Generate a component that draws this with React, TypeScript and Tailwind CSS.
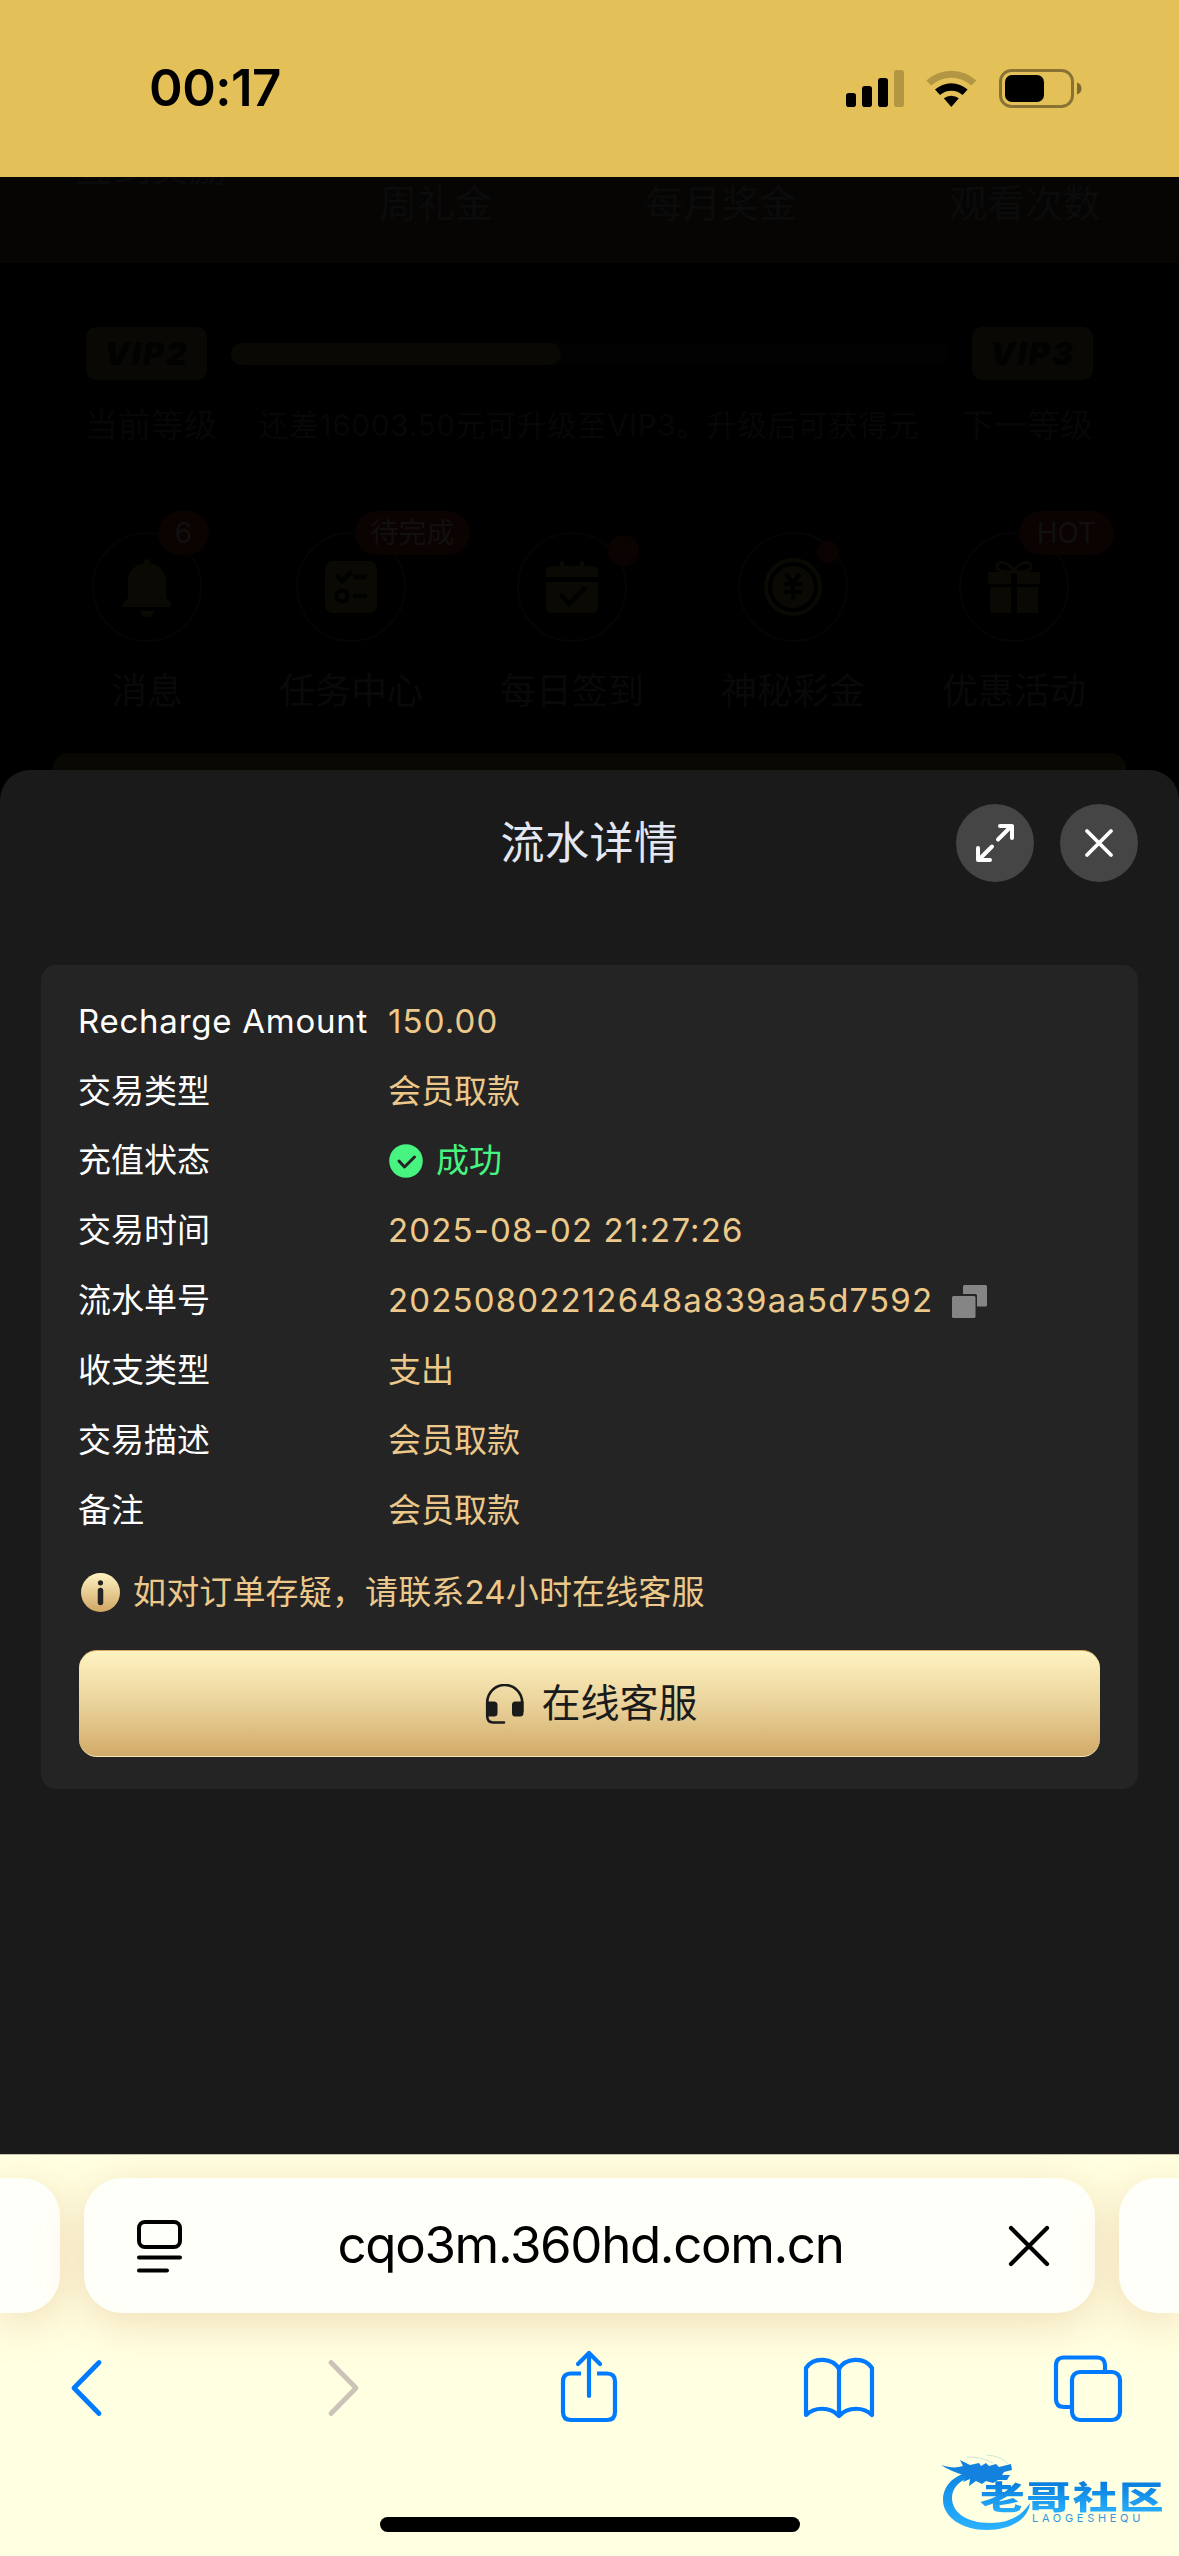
import React from 'react';

const gold = 'text-[#ecc98a]';

const rows: { label: string; value: string; kind?: 'status' | 'copy'; tracking?: string }[] = [
  { label: 'Recharge Amount', value: '150.00', tracking: 'tracking-[1.1px]' },
  { label: '交易类型', value: '会员取款' },
  { label: '充值状态', value: '成功', kind: 'status' },
  { label: '交易时间', value: '2025-08-02 21:27:26', tracking: 'tracking-[1.15px]' },
  { label: '流水单号', value: '20250802212648a839aa5d7592', kind: 'copy', tracking: 'tracking-[1.15px]' },
  { label: '收支类型', value: '支出' },
  { label: '交易描述', value: '会员取款' },
  { label: '备注', value: '会员取款' },
];

const StatusBar = () => (
  <header className="flex h-[177px] items-center justify-between bg-[#e4c058] pr-[97px] pl-[149px]">
    <span className="-mt-[2px] text-[51px] leading-none font-semibold tracking-[-0.5px] text-black">00:17</span>
    <svg className="-mt-[2px] h-[40px] w-[236px]" viewBox="846 67 236 40">
      <rect x="846" y="92" width="10" height="14" rx="2.800" />
      <rect x="862" y="85" width="10" height="21" rx="2.800" />
      <rect x="878" y="77" width="10" height="29" rx="2.800" />
      <rect x="894" y="69" width="10" height="37" rx="2.800" opacity=".22" />
      <path d="M926.300 79.500a37 37 0 0 1 50 0l-5 5a30 30 0 0 0-40 0z" opacity=".22" />
      <path d="M935 88.500a24.500 24.500 0 0 1 32.600 0l-5 5.500a17 17 0 0 0-22.600 0z" />
      <path d="M943.800 97.300a12 12 0 0 1 15 0l-7.500 8.700z" />
      <rect x="1000.500" y="69.500" width="72" height="36" rx="11" fill="none" stroke="#000" strokeWidth="3" opacity=".4" />
      <rect x="1005" y="74" width="39" height="27" rx="7" />
      <path d="M1077 81.500q4.500 1.500 4.500 6t-4.500 6z" opacity=".45" />
    </svg>
  </header>
);

const VipBadge = ({ level }: { level: number }) => (
  <div className="flex h-[53px] w-[121px] items-center justify-center rounded-[10px] bg-[#090804] text-[32px] font-black tracking-[2px] text-[#020200] italic">
    VIP{level}
  </div>
);

const BellIcon = () => (
  <svg className="size-[66px]" viewBox="0 0 66 66" fill="#0a0904">
    <path d="M33 5c2 0 3.500 2 3.500 4.500C46 11 52 18 52 27v17l5 5v4H9v-4l5-5V27c0-9 6-16 15.500-17.500C29.500 7 31 5 33 5zM26 57h14q-2 6-7 6t-7-6z" />
  </svg>
);

const TaskIcon = () => (
  <svg className="size-[66px]" viewBox="0 0 66 66">
    <rect x="7" y="7" width="52" height="52" rx="8" fill="#0a0904" />
    <path d="m19 22 5 5 8-8M37 23h10M37 42h10" fill="none" stroke="#010100" strokeWidth="4.500" strokeLinecap="round" />
    <circle cx="24" cy="42" r="5.500" fill="none" stroke="#010100" strokeWidth="4" />
  </svg>
);

const CalendarIcon = () => (
  <svg className="size-[66px]" viewBox="0 0 66 66">
    <path d="M23 9v8M43 9v8" stroke="#0a0904" strokeWidth="4.500" strokeLinecap="round" />
    <path d="M7 23v-5q0-6 6-6h40q6 0 6 6v5zM7 28h52v25q0 6-6 6H13q-6 0-6-6z" fill="#0a0904" />
    <path d="m23 42 7 8 15-15" fill="none" stroke="#010100" strokeWidth="4.500" strokeLinecap="round" />
  </svg>
);

const CoinIcon = () => (
  <svg className="size-[66px]" viewBox="0 0 66 66">
    <circle cx="33" cy="33" r="27" fill="none" stroke="#0a0904" strokeWidth="4" />
    <circle cx="33" cy="33" r="21" fill="#0a0904" />
    <path d="m26 20 7 9 7-9M33 29v17M24 30h18M24 38h18" fill="none" stroke="#010100" strokeWidth="4" />
  </svg>
);

const GiftIcon = () => (
  <svg className="size-[66px]" viewBox="0 0 66 66">
    <path d="M33 17c-5-9-17-12-17-4 0 4 6 5 17 5 11 0 17-1 17-5 0-8-12-5-17 4z" fill="none" stroke="#0a0904" strokeWidth="3" />
    <path d="M7 18h23v12H7zM36 18h23v12H36zM9 33h21v26H9zM36 33h21v26H36z" fill="#0a0904" />
  </svg>
);

const shortcuts = [
  { label: '消息', icon: <BellIcon />, badge: '6', badgeClass: 'left-[64px] w-[51px]' },
  { label: '任务中心', icon: <TaskIcon />, badge: '待完成', badgeClass: 'left-[57px] w-[115px]' },
  { label: '每日签到', icon: <CalendarIcon />, dotClass: 'top-[1px] left-[89px] size-[31px]' },
  { label: '神秘彩金', icon: <CoinIcon />, dotClass: 'top-[7px] left-[77px] size-[22px]' },
  { label: '优惠活动', icon: <GiftIcon />, badge: 'HOT', badgeClass: 'left-[58px] w-[95px]' },
];

// Member page, still faintly visible through the dimmed overlay
const DimmedPage = () => (
  <section className="flex h-[593px] flex-col overflow-hidden bg-black">
    <div className="flex h-[86px] shrink-0 gap-[152px] bg-[#060503] pl-[75px] text-[38px] leading-[52px] whitespace-nowrap text-[#0b0b0c]">
      <span className="-mt-[36px]">签到奖励</span>
      <span>周礼金</span>
      <span>每月奖金</span>
      <span>观看次数</span>
    </div>

    <div className="mt-[64px] flex items-center justify-between px-[86px]">
      <VipBadge level={2} />
      <div className="h-[22px] w-[717px] rounded-full bg-[#020202]">
        <div className="h-full w-[330px] rounded-full bg-[#090805]" />
      </div>
      <VipBadge level={3} />
    </div>
    <div className="mt-[21px] flex items-center justify-between pr-[86px] pl-[85px] text-[33px] leading-[48px] whitespace-nowrap text-[#070707]">
      <span>当前等级</span>
      <span className="text-[29.5px] tracking-[0.85px]">还差16003.50元可升级至VIP3。升级后可获得元</span>
      <span>下一等级</span>
    </div>

    <div className="mt-[83px] flex gap-[77px] pl-[92px]">
      {shortcuts.map((item) => (
        <div key={item.label} className="flex min-w-[110px] flex-col items-center">
          <div className="relative flex size-[110px] items-center justify-center rounded-full border-2 border-[#050505]">
            {item.icon}
            {item.badge && (
              <span className={`absolute -top-[23px] flex h-[44px] items-center justify-center rounded-full bg-[#0b0202] text-[28px] text-[#101010] ${item.badgeClass}`}>
                {item.badge}
              </span>
            )}
            {item.dotClass && <span className={`absolute rounded-full bg-[#0b0202] ${item.dotClass}`} />}
          </div>
          <span className="mt-[23px] text-[36px] leading-[52px] text-[#090909]">{item.label}</span>
        </div>
      ))}
    </div>

    <div className="mx-[53px] mt-auto h-[17px] rounded-t-[15px] bg-[#0a0803]" />
  </section>
);

const ExpandIcon = () => (
  <svg className="size-[40px]" viewBox="0 0 40 40" fill="none" stroke="#fff" strokeWidth="4" strokeLinecap="round" strokeLinejoin="round">
    <path d="M23 16.500 36 3.500M25 3h12v12M17 23.500 4 36.500M3 25v12h12" />
  </svg>
);

const CloseIcon = () => (
  <svg className="size-[30px]" viewBox="0 0 30 30" fill="none" stroke="#fff" strokeWidth="3.800" strokeLinecap="round">
    <path d="m3 3 24 24M27 3 3 27" />
  </svg>
);

const CheckBadge = () => (
  <svg className="mr-[13px] ml-px size-[34px]" viewBox="0 0 34 34">
    <circle cx="17" cy="17" r="16.800" fill="#47f480" />
    <path d="m10 17 5.500 6L25.500 13" fill="none" stroke="#242424" strokeWidth="3" strokeLinecap="round" strokeLinejoin="round" />
  </svg>
);

const CopyIcon = () => (
  <svg className="ml-[19px] h-[33px] w-[35px]" viewBox="0 0 35 33" fill="#858585">
    <path d="M12.500 0h21q1.500 0 1.500 1.500V20q0 1.500-1.500 1.500H25V10.500q0-1.500-1.500-1.500H11V1.500Q11 0 12.500 0z" />
    <rect y="11" width="23.500" height="22" rx="1.500" />
  </svg>
);

const InfoIcon = () => (
  <svg className="mr-[13px] ml-[2px] size-[39px]" viewBox="0 0 39 39">
    <defs>
      <linearGradient id="info" x2="0" y2="1">
        <stop offset="0" stopColor="#fff3c2" />
        <stop offset="1" stopColor="#d0a663" />
      </linearGradient>
    </defs>
    <circle cx="19.500" cy="19.500" r="19.500" fill="url(#info)" />
    <circle cx="19.500" cy="9.800" r="2.600" fill="#242424" />
    <path d="M19.500 17.500v12" stroke="#242424" strokeWidth="5.500" strokeLinecap="round" />
  </svg>
);

const HeadsetIcon = () => (
  <svg className="size-[40px]" viewBox="0 0 40 40">
    <path d="M2.200 29V18.500a17.500 17.500 0 0 1 35 0V27M2.200 28v4q0 6.500 6 6.500H19" fill="none" stroke="#1b1b1b" strokeWidth="2.600" strokeLinecap="round" />
    <path d="M1 17.500h8q3.500 0 3.500 3.500v8q0 3.500-3.500 3.500H2.500zM30 17.500h8.500V29q0 3.500-3.500 3.500h-5q-3 0-3-3.500v-8q0-3.500 3-3.500z" fill="#1b1b1b" />
  </svg>
);

const DetailSheet = () => (
  <div className="bg-black">
    <main className="flex h-[1384px] flex-col rounded-t-[30px] bg-[#1a1a1a] px-[41px]">
      <div className="grid h-[145px] grid-cols-[182px_1fr_182px] items-center">
        <h1 className="col-start-2 text-center text-[44px] tracking-[0.5px] text-[#e3e6f3]">流水详情</h1>
        <div className="flex justify-end gap-[26px]">
          <button className="flex size-[78px] items-center justify-center rounded-full bg-[#454545]"><ExpandIcon /></button>
          <button className="flex size-[78px] items-center justify-center rounded-full bg-[#454545]"><CloseIcon /></button>
        </div>
      </div>

      <section className="mt-[50px] flex h-[824px] flex-col rounded-[15px] bg-[#242424] px-[38px] pt-[21.5px]">
        {rows.map((row) => (
          <div key={row.label} className="-ml-px flex h-[69.9px] items-center text-[33px] whitespace-nowrap">
            <span className={`w-[310px] text-white ${row.tracking && row.label.startsWith('R') ? 'tracking-[0.75px]' : ''}`}>{row.label}</span>
            {row.kind === 'status' && <CheckBadge />}
            <span className={`${row.kind === 'status' ? 'text-[#47f480]' : gold} ${row.tracking ?? ''}`}>{row.value}</span>
            {row.kind === 'copy' && <CopyIcon />}
          </div>
        ))}
        <p className={`mt-[22px] flex h-[50px] items-center text-[33px] tracking-[0.15px] ${gold}`}>
          <InfoIcon />
          如对订单存疑，请联系24小时在线客服
        </p>
        <button className="mt-[32.5px] flex h-[107px] items-center justify-center gap-[16px] rounded-[18px] border-t border-b border-t-[#d6aa63] border-b-[#f8e7b4] bg-linear-to-b from-[#fff3c2] via-[#ead39b] to-[#d2ab69] pl-[4px] text-[39px] text-[#1b1b1b]">
          <HeadsetIcon />
          在线客服
        </button>
      </section>
    </main>
  </div>
);

const pill = 'h-[135px] bg-[#fffff9] shadow-[0_10px_44px_rgba(205,130,75,0.27)]';

const AddressBar = () => (
  <div className="flex justify-between pt-[23px]">
    <div className={`w-[60px] rounded-r-[38px] ${pill}`} />
    <div className={`flex w-[1011px] items-center justify-between rounded-[38px] pr-[44px] pl-[52px] ${pill}`}>
      <svg className="mt-[2px] h-[56px] w-[47px]" viewBox="0 0 47 56" fill="none" stroke="#000" strokeWidth="4" strokeLinecap="round">
        <rect x="3" y="3" width="41" height="25" rx="6" />
        <path d="M3 38.500h41M3 51.500h28" />
      </svg>
      <span className="mr-[9px] text-[51px] tracking-[-1.35px] text-black">cqo3m.360hd.com.cn</span>
      <svg className="size-[44px]" viewBox="0 0 44 44" stroke="#000" strokeWidth="4.200" strokeLinecap="round">
        <path d="m4 4 36 36M40 4 4 40" />
      </svg>
    </div>
    <div className={`w-[60px] rounded-l-[38px] ${pill}`} />
  </div>
);

const Toolbar = () => (
  <nav className="mt-[36px] flex items-center pl-[70px]">
    <svg className="h-[74px] w-[33px]" viewBox="0 0 33 74" fill="none" stroke="#007aff" strokeWidth="4.800" strokeLinecap="round" strokeLinejoin="round">
      <path d="M29 13.500 4 39l25 25.500" />
    </svg>
    <svg className="ml-[224px] h-[74px] w-[33px]" viewBox="0 0 33 74" fill="none" stroke="#cbc3b7" strokeWidth="4.800" strokeLinecap="round" strokeLinejoin="round">
      <path d="m4 13.500 25 25.500L4 64.500" />
    </svg>
    <svg className="ml-[200px] h-[74px] w-[58px]" viewBox="0 0 58 74" fill="none" stroke="#007aff" strokeWidth="4.200" strokeLinecap="round" strokeLinejoin="round">
      <path d="M29 47V4M18 15 29 4l11 11" />
      <path d="M21 24.500H11q-8 0-8 8V63q0 8 8 8h36q8 0 8-8V32.500q0-8-8-8H37" strokeLinecap="butt" />
    </svg>
    <svg className="ml-[185px] h-[74px] w-[72px]" viewBox="0 0 72 74" fill="none" stroke="#007aff" strokeWidth="4.200" strokeLinejoin="round">
      <path d="M36 20C30 9 11 7 3 19v47c8-8 24-9 33 1 9-10 25-9 33-1V19C61 7 42 9 36 20zv47" />
    </svg>
    <svg className="ml-[178px] h-[74px] w-[70px]" viewBox="0 0 70 74" fill="none" stroke="#007aff" strokeWidth="4.200">
      <rect x="19" y="23" width="48" height="48" rx="8" />
      <path d="M52 23v-6.500q0-8-8-8H11q-8 0-8 8V50q0 8 8 8h8" />
    </svg>
  </nav>
);

const Watermark = () => (
  <div className="absolute right-[16px] bottom-[24px] h-[88px] w-[224px]">
    <svg className="absolute top-0 left-0 h-[88px] w-[100px]" viewBox="0 0 100 88">
      <defs>
        <linearGradient id="dragon" x1="0" y1="16" x2="0" y2="86" gradientUnits="userSpaceOnUse">
          <stop offset="0" stopColor="#067bdc" />
          <stop offset="1" stopColor="#2bb2ff" />
        </linearGradient>
      </defs>
      <path d="M30 28C13 32 4 43 4 56c0 17 19 30 44 30 23 0 41-10 43-27-9 14-22 20-40 20-24 0-38-11-38-25 0-10 7-18 22-22z" fill="url(#dragon)" />
      <path d="M2 21c9 3 16 3 22 1l-3-6 10 5 9-2 2 3 5-3 3 3 7-2 3 3 12-3 1 6-8 2-2 3 8 0-3 5-9 0-5 3-7-2-4 3-6-3-7 5 1-7-7 3 3-6Q11 27 2 21z" fill="#1282de" />
      <path d="M28 13q16 0 26 6M47 11q16 1 22 9" fill="none" stroke="#9dccc8" strokeWidth="1" opacity=".5" />
    </svg>
    <span className="absolute top-[33px] left-[41px] origin-left scale-x-[1.145] scale-y-[0.82] bg-linear-to-b from-[#067bdc] to-[#2bb2ff] bg-clip-text text-[39px] leading-[42px] font-black tracking-[1.5px] whitespace-nowrap text-transparent">
      老哥社区
    </span>
    <span className="absolute top-[69px] left-[93px] text-[11px] leading-none tracking-[3.7px] text-[#3795dc]">LAOGESHEQU</span>
  </div>
);

const BrowserChrome = () => (
  <footer className="relative h-[402px] overflow-hidden border-t border-[#c9c3ae] bg-[#ffffe1]">
    <AddressBar />
    <Toolbar />
    <div className="mx-auto mt-[94px] h-[15px] w-[420px] rounded-full bg-black" />
    <Watermark />
  </footer>
);

const App: React.FC = () => {
  return (
    <div className="h-[2556px] w-[1179px] overflow-hidden bg-black font-['Inter','Noto_Sans_CJK_SC',sans-serif]">
      <StatusBar />
      <DimmedPage />
      <DetailSheet />
      <BrowserChrome />
    </div>
  );
};

export default App;
